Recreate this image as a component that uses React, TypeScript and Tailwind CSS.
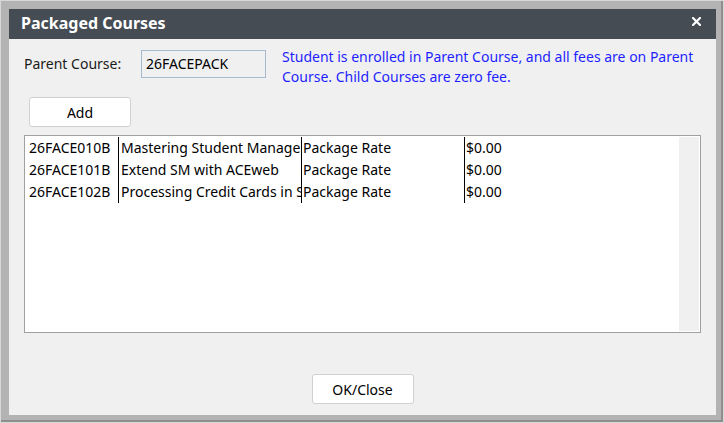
import React from 'react';

const rows = [
  { code: '26FACE010B', title: 'Mastering Student Management', rate: 'Package Rate', fee: '$0.00' },
  { code: '26FACE101B', title: 'Extend SM with ACEweb', rate: 'Package Rate', fee: '$0.00' },
  { code: '26FACE102B', title: 'Processing Credit Cards in SM', rate: 'Package Rate', fee: '$0.00' },
];

const font = { fontFamily: '"Noto Sans", "Open Sans", Arial, sans-serif' };

export default function App() {
  return (
    <div className="w-[724px] h-[423px] border border-[#d8d8d8] bg-[#b3b3b3]" style={font}>
      <div className="h-full w-full border-r-2 border-b-2 border-[#8e8e8e] pl-2 pt-2 pr-[5px] pb-[5px]">
        <div className="flex h-full w-full flex-col">
          {/* title bar */}
          <div className="flex h-[30px] shrink-0 items-start justify-between bg-[#454c54] pl-3 pr-[15px]">
            <span className="mt-[3px] text-[16px] font-bold leading-[22px] text-white">Packaged Courses</span>
            <svg className="mt-[8px]" width="9" height="9" viewBox="0 0 9 9">
              <path d="M1 1L8 8M8 1L1 8" stroke="#ffffff" strokeWidth="2.2" strokeLinecap="square" />
            </svg>
          </div>

          {/* body */}
          <div className="flex flex-1 flex-col bg-[#f0f0f0] px-[15px] pb-[11px] text-[14px] text-[#1a1a1a]">
            <div className="flex items-start pt-2">
              <span className="mt-[7px] w-[117px] leading-[20px]">Parent Course:</span>
              <div className="mt-[3px] flex h-[28px] w-[125px] items-center border border-[#a6b9cf] bg-[#f0f0f0] px-[4px] leading-[20px] text-black">
                26FACEPACK
              </div>
              <p className="ml-[16px] w-[416px] leading-[20px] text-[#1f1fff]">
                Student is enrolled in Parent Course, and all fees are on Parent Course. Child Courses are zero fee.
              </p>
            </div>

            <button className="ml-[5px] mt-[10px] h-[30px] w-[102px] rounded-[3px] border border-[#d0d0d0] bg-white text-black">
              Add
            </button>

            <div className="mt-[8px] flex h-[198px] w-full border border-[#a0a0a0] bg-white py-px pr-px">
              <div className="flex-1">
                {rows.map(r => (
                  <div key={r.code} className="flex h-[22px] items-center leading-[22px] text-black">
                    <div className="w-[94px] shrink-0 overflow-hidden whitespace-nowrap border-r border-black pl-[4px]">{r.code}</div>
                    <div className="w-[183px] shrink-0 overflow-hidden whitespace-nowrap border-r border-black pl-[2px]">{r.title}</div>
                    <div className="w-[163px] shrink-0 overflow-hidden whitespace-nowrap border-r border-black pl-[1px]">{r.rate}</div>
                    <div className="flex-1 overflow-hidden whitespace-nowrap pl-[1px]">{r.fee}</div>
                  </div>
                ))}
              </div>
              <div className="w-[20px] shrink-0 bg-[#f0f0f0]" />
            </div>

            <div className="mt-auto flex justify-center">
              <button className="h-[30px] w-[102px] rounded-[3px] border border-[#d0d0d0] bg-white text-black">
                OK/Close
              </button>
            </div>
          </div>
        </div>
      </div>
    </div>
  );
}
